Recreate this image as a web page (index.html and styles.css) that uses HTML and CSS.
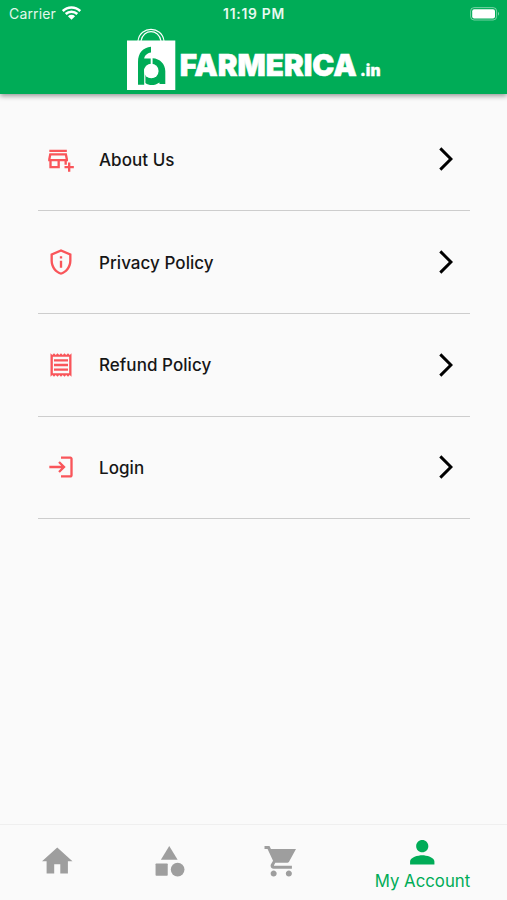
FILE: index.html
```html
<!DOCTYPE html>
<html lang="en">
<head>
<meta charset="utf-8">
<title>My Account</title>
<link rel="stylesheet" href="styles.css">
</head>
<body>
<header class="header">
  <div class="status">
    <div class="carrier"><span class="carrier-name">Carrier</span>
      <svg class="wifi" viewBox="0 0 19 14"><path d="M.8 5A12.5 12.5 0 0 1 18.200 5M3.700 8a8.400 8.400 0 0 1 11.600 0" fill="none" stroke="#fff" stroke-width="2.500"/><path d="M5.900 10.200a5.100 5.100 0 0 1 7.200 0L9.500 13.800z" fill="#fff"/></svg>
    </div>
    <span class="time">11:19 PM</span>
    <svg class="battery" viewBox="0 0 30 14"><rect x=".6" y=".6" width="26" height="12.400" rx="3.500" fill="none" stroke="#fff" stroke-opacity=".45"/><rect x="2.200" y="2.200" width="22.800" height="9.200" rx="2" fill="#fff"/><path d="M28 4.800q2 2 0 4z" fill="#fff" fill-opacity=".5"/></svg>
  </div>
  <svg class="logo" viewBox="127 28 254 63">
    <g fill="none" stroke="#fff" stroke-width="1.100"><path d="M138 41C140 25.500 162 25.500 164 41M141 41C143 28.500 159 28.500 161 41"/></g>
    <path fill="#fff" d="M127 40.500h48.300V90H127z"/>
    <path fill="#00ac57" d="M138 84.800V62C138 53 143 47.500 151 46.800V52.500C147 53.200 144.500 55.500 144.200 58.500H150.700V65L144.200 69V84.800z"/>
    <path fill="#00ac57" d="M152.600 58.200C160 58.500 165.300 64 165.300 71V84H159.500V82.500C155 85.800 149 85.800 145.400 83V74L152.600 64z"/>
    <circle cx="151.300" cy="71" r="7.300" fill="#fff"/>
    <g class="wordmark"><text class="brand" x="179.800" y="76" textLength="177" lengthAdjust="spacingAndGlyphs">FARMERICA</text><text class="suffix" x="360" y="76" textLength="20.500" lengthAdjust="spacingAndGlyphs">.in</text></g>
  </svg>
</header>
<main class="menu">
  <a class="row"><svg class="icon" viewBox="0 0 24 24"><path d="M15 17h2v-3h1v-2l-1-5H2l-1 5v2h1v6h9v-6h4zM9 18H4v-4h5zM3.040 12l.6-3h11.720l.6 3zM2 4h15v2H2zM20 18v-3h-2v3h-3v2h3v3h2v-3h3v-2z" fill-rule="evenodd"/></svg><span class="label">About Us</span><svg class="chevron" viewBox="0 0 24 24"><path d="M6.230 20.230L8 22 18 12 8 2 6.230 3.770 14.460 12z"/></svg></a>
  <a class="row"><svg class="icon" viewBox="0 0 24 24"><path d="M12 3.190l7 3.110V11c0 4.520-2.980 8.690-7 9.930C7.980 19.690 5 15.520 5 11V6.300l7-3.110M12 1L3 5v6c0 5.550 3.840 10.740 9 12 5.160-1.260 9-6.450 9-12V5zM11 7h2v2h-2zM11 11h2v6h-2z" fill-rule="evenodd"/></svg><span class="label">Privacy Policy</span><svg class="chevron" viewBox="0 0 24 24"><path d="M6.230 20.230L8 22 18 12 8 2 6.230 3.770 14.460 12z"/></svg></a>
  <a class="row"><svg class="icon" viewBox="0 0 24 24"><path d="M19.500 3.500L18 2l-1.500 1.500L15 2l-1.500 1.500L12 2l-1.500 1.500L9 2 7.500 3.500 6 2 4.500 3.500 3 2v20l1.500-1.500L6 22l1.500-1.500L9 22l1.500-1.500L12 22l1.500-1.500L15 22l1.500-1.500L18 22l1.500-1.500L21 22V2zM19 19.090H5V4.910h14zM6 15h12v2H6zM6 11h12v2H6zM6 7h12v2H6z" fill-rule="evenodd"/></svg><span class="label">Refund Policy</span><svg class="chevron" viewBox="0 0 24 24"><path d="M6.230 20.230L8 22 18 12 8 2 6.230 3.770 14.460 12z"/></svg></a>
  <a class="row"><svg class="icon" viewBox="0 0 24 24"><path d="M11 7L9.600 8.400l2.600 2.600H2v2h10.200l-2.600 2.600L11 17l5-5zM20 19h-8v2h8c1.100 0 2-.9 2-2V5c0-1.100-.9-2-2-2h-8v2h8z"/></svg><span class="label">Login</span><svg class="chevron" viewBox="0 0 24 24"><path d="M6.230 20.230L8 22 18 12 8 2 6.230 3.770 14.460 12z"/></svg></a>
</main>
<nav class="tabs">
  <a class="tab"><svg viewBox="0 0 24 24"><path d="M10 20v-6h4v6h5v-8h3L12 3 2 12h3v8z"/></svg></a>
  <a class="tab"><svg viewBox="0 0 24 24"><path d="M12 2l-5.500 9h11z"/><circle cx="17.500" cy="17.500" r="4.500"/><rect x="3" y="13.500" width="8" height="8" rx=".5"/></svg></a>
  <a class="tab"><svg viewBox="0 0 24 24"><path d="M7 18c-1.100 0-1.990.9-1.990 2S5.900 22 7 22s2-.9 2-2-.9-2-2-2zM1 2v2h2l3.600 7.590-1.350 2.450c-.16.28-.25.610-.25.960 0 1.100.9 2 2 2h12v-2H7.420c-.14 0-.25-.11-.25-.25l.03-.12.900-1.630h7.450c.75 0 1.410-.41 1.750-1.030L21.700 4H5.210l-.94-2zM17 18c-1.100 0-1.990.9-1.990 2s.89 2 1.990 2 2-.9 2-2-.9-2-2-2z"/></svg></a>
  <a class="tab active"><svg viewBox="0 0 24 24"><path d="M12 12c2.210 0 4-1.790 4-4s-1.790-4-4-4-4 1.790-4 4 1.790 4 4 4zm0 2c-2.670 0-8 1.340-8 4v2h16v-2c0-2.660-5.330-4-8-4z"/></svg><span class="tab-label">My Account</span></a>
</nav>
</body>
</html>
```
FILE: styles.css
```css
* { box-sizing: border-box; }
body {
  margin: 0;
  height: 900px;
  display: flex;
  flex-direction: column;
  background: #fafafa;
  font-family: Inter, "Liberation Sans", sans-serif;
  overflow: hidden;
}
svg { display: block; flex: none; }
.header {
  height: 94px;
  background: #00ac57;
  color: #fff;
  box-shadow: 0 2px 5px rgba(0, 0, 0, .4);
}
.status {
  height: 28px;
  padding: 0 7px 0 9px;
  display: grid;
  grid-template-columns: 1fr auto 1fr;
  align-items: center;
}
.carrier { display: flex; align-items: center; gap: 6px; }
.carrier-name { font-size: 14px; line-height: 16px; margin-top: -1px; letter-spacing: .15px; color: #e2f7eb; }
.wifi { width: 19px; height: 14px; margin-top: -2px; }
.time { font-size: 13.8px; font-weight: 600; letter-spacing: .75px; margin-right: 1px; color: #e8f9f0; }
.battery { width: 30px; height: 14px; justify-self: end; margin-top: -1px; }
.logo { width: 254px; height: 63px; margin-left: 127px; }
.wordmark { fill: #fff; stroke: #fff; font-weight: 900; }
.brand { font-size: 30.5px; stroke-width: .6px; }
.suffix { font-size: 16px; stroke-width: .3px; }
.menu { flex: 1; padding: 14.500px 37px 0 38px; }
.row {
  height: 102.700px;
  padding: 0 10.500px 0 9px;
  display: flex;
  align-items: center;
  border-bottom: 1px solid #cdcdcd;
}
.icon { width: 28px; height: 28px; fill: #f9555a; }
.label {
  flex: 1;
  margin-left: 24px;
  padding-top: 1px;
  font-size: 17px;
  font-weight: 500;
  letter-spacing: .05px;
  color: #161616;
}
.chevron { width: 28px; height: 28px; fill: #000; }
.tabs {
  height: 76px;
  padding-top: 1px;
  display: grid;
  grid-template-columns: 114px 111px 113px 169px;
  border-top: 1px solid #efefef;
}
.tab {
  height: 71px;
  display: flex;
  flex-direction: column;
  align-items: center;
  justify-content: center;
  fill: #9e9e9e;
}
.tab svg { width: 36.500px; height: 36.500px; }
.active { fill: #00ac57; color: #00ac57; justify-content: flex-start; padding-top: 8px; }
.tab-label { font-size: 16.8px; line-height: 20px; }
```
